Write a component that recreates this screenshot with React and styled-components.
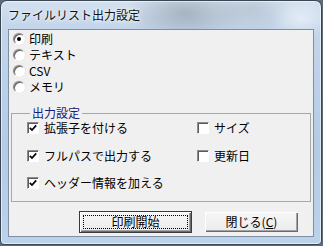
import styled, { createGlobalStyle } from "styled-components";

const GlobalStyle = createGlobalStyle`
  html, body {
    margin: 0;
    padding: 0;
    background: #5f6b78;
  }
  body {
    width: 323px;
    height: 246px;
    overflow: hidden;
    font-family: "Noto Sans CJK JP", "Liberation Sans", sans-serif;
    font-size: 12px;
    color: #000;
  }
`;

const Window = styled.div`
  box-sizing: border-box;
  width: 322px;
  height: 245px;
  display: flex;
  flex-direction: column;
  padding: 0 7px 7px 7px;
  border: 1px solid #3b4653;
  border-radius: 7px 7px 4px 4px;
  box-shadow: inset 0 0 0 1px rgba(255, 255, 255, 0.55);
  background:
    radial-gradient(ellipse 60px 30px at 185px 12px, rgba(120, 130, 140, 0.45), transparent),
    radial-gradient(ellipse 40px 26px at 250px 8px, rgba(150, 160, 170, 0.35), transparent),
    radial-gradient(ellipse 30px 20px at 300px 18px, rgba(255, 255, 255, 0.5), transparent),
    linear-gradient(180deg, #d3e0ef 0px, #c3d5ea 28px, #b4cbe6 60%, #bcd2ea 100%);
`;

const TitleBar = styled.div`
  height: 28px;
  display: flex;
  align-items: center;
  padding-bottom: 1px;
  box-sizing: border-box;
`;

const Title = styled.span`
  font-size: 12px;
  line-height: 16px;
  color: #111;
  text-shadow: 0 0 6px rgba(255, 255, 255, 0.95), 0 0 3px rgba(255, 255, 255, 0.9);
`;

const Client = styled.div`
  flex: 1;
  display: flex;
  flex-direction: column;
  background: #f0f0f0;
  border: 1px solid #7f8fa3;
`;

const RadioList = styled.div`
  display: flex;
  flex-direction: column;
  padding: 1px 0 0 4px;
`;

const OptionRow = styled.label`
  height: 16px;
  display: flex;
  align-items: center;
  gap: ${(p) => p.$gap || 4}px;
  line-height: 16px;
  white-space: nowrap;
`;

const RadioCircle = styled.span`
  box-sizing: border-box;
  width: 12px;
  height: 12px;
  border-radius: 50%;
  background: #fff;
  border: 1px solid;
  border-color: #8d8d8d #ffffff #ffffff #8d8d8d;
  box-shadow: inset 1px 1px 0 #5a5a5a, 0 0 0 0.5px #dcdcdc;
  display: flex;
  align-items: center;
  justify-content: center;

  &::after {
    content: "";
    width: 4px;
    height: 4px;
    border-radius: 50%;
    background: ${(p) => (p.$checked ? "#000" : "transparent")};
  }
`;

const Group = styled.fieldset`
  margin: 10px 2px 0 2px;
  padding: 0 0 10px 15px;
  border: 1px solid #a8a8a8;
  min-width: 0;
`;

const Legend = styled.legend`
  margin-left: 3px;
  padding: 0 2px;
  line-height: 16px;
  color: #14217a;
`;

const CheckGrid = styled.div`
  display: grid;
  grid-template-columns: 170px 1fr;
  row-gap: 11.5px;
  margin-top: -1px;
`;

const CheckBox = styled.span`
  box-sizing: border-box;
  width: 12px;
  height: 12px;
  background: #fff;
  border: 1px solid;
  border-color: #8d8d8d #ffffff #ffffff #8d8d8d;
  box-shadow: inset 1px 1px 0 #5a5a5a;
  display: flex;
  align-items: center;
  justify-content: center;
`;

const ButtonRow = styled.div`
  display: flex;
  justify-content: flex-end;
  gap: 12px;
  margin-top: 9px;
  padding-right: 14px;
`;

const Button = styled.button`
  box-sizing: border-box;
  width: ${(p) => p.$width}px;
  height: 22px;
  padding: 0;
  font-family: inherit;
  font-size: 12px;
  line-height: 16px;
  color: #000;
  background: linear-gradient(180deg, #f6f6f6, #ebebeb);
  border: 1px solid ${(p) => (p.$default ? "#3a3a3a" : "#f0f0f0")};
  box-shadow:
    inset 1px 1px 0 #ffffff,
    inset -1px -1px 0 #6b6b6b,
    inset -2px -2px 0 #a3a3a3;
  position: relative;

  &::after {
    content: "";
    display: ${(p) => (p.$default ? "block" : "none")};
    position: absolute;
    inset: 3px;
    border: 1px dotted #000;
  }
`;

const Mnemonic = styled.span`
  text-decoration: underline;
`;

const Check = () => (
  <svg width="8" height="8" viewBox="0 0 8 8">
    <polyline points="0.8,3.8 3,6 7.2,1.4" fill="none" stroke="#000" strokeWidth="1.7" />
  </svg>
);

const Radio = ({ checked, children }) => (
  <OptionRow>
    <RadioCircle $checked={checked} />
    {children}
  </OptionRow>
);

const Option = ({ checked, children }) => (
  <OptionRow $gap={5}>
    <CheckBox>{checked && <Check />}</CheckBox>
    {children}
  </OptionRow>
);

export default function App() {
  return (
    <>
      <GlobalStyle />
      <Window>
        <TitleBar>
          <Title>ファイルリスト出力設定</Title>
        </TitleBar>
        <Client>
          <RadioList>
            <Radio checked>印刷</Radio>
            <Radio>テキスト</Radio>
            <Radio>CSV</Radio>
            <Radio>メモリ</Radio>
          </RadioList>
          <Group>
            <Legend>出力設定</Legend>
            <CheckGrid>
              <Option checked>拡張子を付ける</Option>
              <Option>サイズ</Option>
              <Option checked>フルパスで出力する</Option>
              <Option>更新日</Option>
              <Option checked>ヘッダー情報を加える</Option>
            </CheckGrid>
          </Group>
          <ButtonRow>
            <Button $width={113} $default>
              印刷開始
            </Button>
            <Button $width={95}>
              閉じる(<Mnemonic>C</Mnemonic>)
            </Button>
          </ButtonRow>
        </Client>
      </Window>
    </>
  );
}
